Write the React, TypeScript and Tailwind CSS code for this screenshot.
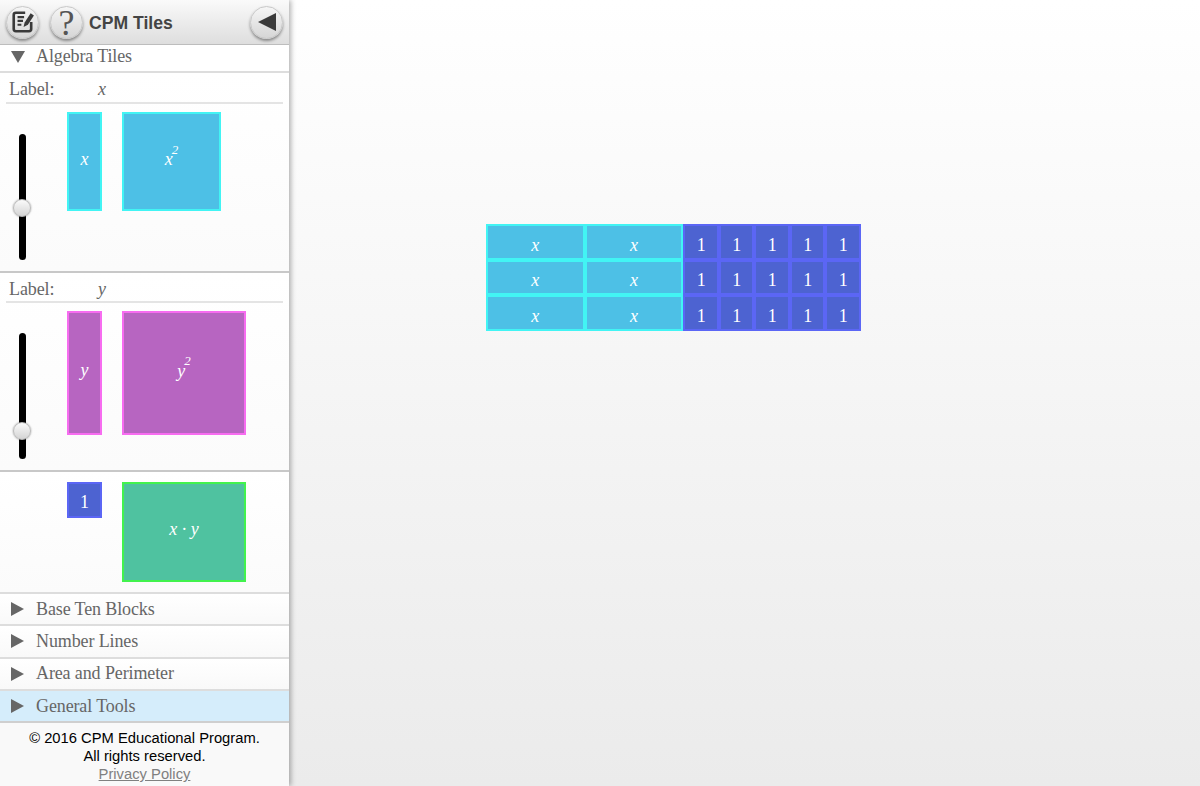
import React from 'react';

const serif = "font-['Liberation_Serif',serif]";
const sans = "font-['Liberation_Sans',Arial,sans-serif]";

const RoundButton = ({ children }: { children: React.ReactNode }) => (
    <div className="w-[33px] h-[33px] rounded-full border border-[#c8c8c8] bg-gradient-to-b from-[#f6f6f6] to-[#d6d6d6] shadow-[0_2px_3px_rgba(0,0,0,0.4)] flex items-center justify-center shrink-0">
        {children}
    </div>
);

const Tile = ({ className, children }: { className: string; children: React.ReactNode }) => (
    <div className={`${serif} border-2 flex items-center justify-center text-white text-[18px] leading-none ${className}`}>
        {children}
    </div>
);

const Slider = ({ className }: { className: string }) => (
    <div className={`relative w-[7px] h-[126px] bg-black rounded-full ml-[18.5px] shrink-0 ${className}`}>
        <div className="absolute left-[-5.5px] top-[var(--thumb)] w-[18px] h-[18px] rounded-full border border-[#bbbbbb] bg-gradient-to-b from-[#fbfbfb] to-[#d4d4d4] shadow-[0_0_2px_rgba(0,0,0,0.4)]" />
    </div>
);

const LabelRow = ({ name, className }: { name: string; className: string }) => (
    <div className={`${serif} mx-[6px] pl-[3px] border-b-2 border-[#e4e4e4] flex items-center text-[18px] tracking-[-0.1px] text-[#666666] ${className}`}>
        <span className="w-[89px]">Label:</span>
        <span className="italic">{name}</span>
    </div>
);

const MenuRow = ({ label, active, last }: { label: string; active?: boolean; last?: boolean }) => (
    <div className={`${serif} h-[32.3px] pl-[11px] flex items-center text-[18px] tracking-[-0.12px] text-[#666666] border-b-2 ${last ? 'border-[#cfcfcf]' : 'border-[#dddddd]'} ${active ? 'bg-[#d5edfb]' : 'bg-gradient-to-b from-white to-[#f9f9f9]'}`}>
        <svg width="13" height="14" viewBox="0 0 13 14" className="mr-[12px] shrink-0">
            <path d="M0 0 L13 7 L0 14 Z" fill="#666666" />
        </svg>
        {label}
    </div>
);

const xTile = 'w-[98.7px] h-[35.5px] bg-[#4dc0e6] border-[#42f4f4] pt-[6px]';
const unitTile = 'w-[35.5px] h-[35.5px] bg-[#4d63d1] border-[#5b66f5] pt-[6px]';

export default function App() {
    const rows = [0, 1, 2];
    const units = [0, 1, 2, 3, 4];

    return (
        <div className="flex w-[1200px] h-[786px] overflow-hidden bg-gradient-to-b from-white to-[#ebebeb]">
            {/* Sidebar */}
            <div className="w-[289px] h-full shrink-0 flex flex-col bg-[#fbfbfb] shadow-[2px_0_5px_rgba(0,0,0,0.3)] z-10">
                <div className="h-[45px] flex items-center pl-[6px] pr-[6px] border-b border-[#bdbdbd] bg-gradient-to-b from-[#fafafa] to-[#dedede]">
                    <RoundButton>
                        <svg width="24" height="24" viewBox="0 0 22 22" fill="none" stroke="#3a3a3a">
                            <path d="M13 2.5 H4.5 Q2.5 2.5 2.5 4.5 V17.5 Q2.5 19.5 4.5 19.5 H16.5 Q18.5 19.5 18.5 17.5 V11" strokeWidth="2.4" />
                            <path d="M6 6.5 H12 M6 10 H11 M6 13.5 H9.5" strokeWidth="2" />
                            <path d="M11.5 15.5 L12.5 11.5 L18 3 L21 5 L15.5 13.5 Z" fill="#3a3a3a" stroke="none" />
                        </svg>
                    </RoundButton>
                    <div className="ml-[11px]">
                        <RoundButton>
                            <span className={`${serif} text-[36px] leading-none pt-[2px] text-[#555555] font-normal`}>?</span>
                        </RoundButton>
                    </div>
                    <span className={`${sans} ml-[6px] pt-[2px] text-[17.6px] font-bold text-[#444444]`}>CPM Tiles</span>
                    <div className="ml-auto">
                        <RoundButton>
                            <svg width="20" height="20" viewBox="0 0 20 20">
                                <path d="M1 10 L19 1 V19 Z" fill="#3a3a3a" />
                            </svg>
                        </RoundButton>
                    </div>
                </div>

                <div className={`${serif} h-[28px] pl-[11px] pb-[3px] flex items-center text-[18px] tracking-[-0.12px] text-[#666666] border-b-2 border-[#dddddd] bg-white`}>
                    <svg width="14" height="12" viewBox="0 0 14 12" className="mr-[11px] shrink-0">
                        <path d="M0 0 L14 0 L7 12 Z" fill="#666666" />
                    </svg>
                    Algebra Tiles
                </div>

                {/* x panel */}
                <div className="h-[200px] border-b-2 border-[#c8c8c8] bg-gradient-to-b from-white to-[#fbfbfb]">
                    <LabelRow name="x" className="h-[31px] pt-[4px]" />
                    <div className="flex">
                        <Slider className="mt-[30px] [--thumb:65px]" />
                        <div className="flex gap-[20px] ml-[41.5px] mt-[8px] items-start">
                            <Tile className="w-[35px] h-[99px] bg-[#4dc0e6] border-[#42f4f4] pb-[6px] italic">x</Tile>
                            <Tile className="w-[99px] h-[99px] bg-[#4dc0e6] border-[#42f4f4] pb-[6px] italic">
                                <span>x<sup className="text-[13px] align-[5px] leading-none -ml-[1px]">2</sup></span>
                            </Tile>
                        </div>
                    </div>
                </div>

                {/* y panel */}
                <div className="h-[199px] border-b-2 border-[#c8c8c8] bg-gradient-to-b from-white to-[#fbfbfb]">
                    <LabelRow name="y" className="h-[30px] pt-[4px]" />
                    <div className="flex">
                        <Slider className="mt-[30px] [--thumb:89px]" />
                        <div className="flex gap-[20px] ml-[41.5px] mt-[8px] items-start">
                            <Tile className="w-[35px] h-[124px] bg-[#b765c1] border-[#f76cf0] pb-[6px] italic">y</Tile>
                            <Tile className="w-[124px] h-[124px] bg-[#b765c1] border-[#f76cf0] pb-[6px] italic">
                                <span>y<sup className="text-[13px] align-[5px] leading-none -ml-[1px]">2</sup></span>
                            </Tile>
                        </div>
                    </div>
                </div>

                {/* unit panel */}
                <div className="h-[122px] border-b-2 border-[#dddddd] bg-gradient-to-b from-white to-[#fbfbfb] flex gap-[20px] pl-[67px] pt-[10px] items-start">
                    <Tile className="w-[35px] h-[36px] bg-[#4d63d1] border-[#5b66f5] pt-[4px]">1</Tile>
                    <Tile className="w-[124px] h-[100px] bg-[#4fc2a0] border-[#42f24e] pb-[6px] italic">x · y</Tile>
                </div>

                <MenuRow label="Base Ten Blocks" />
                <MenuRow label="Number Lines" />
                <MenuRow label="Area and Perimeter" />
                <MenuRow label="General Tools" active last />

                <div className={`${sans} flex-1 bg-[#f9f9f9] pt-[6px] text-center text-[14.75px] leading-[18px] text-black`}>
                    <div>© 2016 CPM Educational Program.</div>
                    <div>All rights reserved.</div>
                    <div className="text-[#808080] underline">Privacy Policy</div>
                </div>
            </div>

            {/* Canvas */}
            <div className="flex-1 pl-[197px] pt-[224px]">
                <div className="flex items-start">
                    <div className="flex flex-col">
                        {rows.map((r) => (
                            <div key={r} className="flex">
                                <Tile className={xTile}><span className="italic">x</span></Tile>
                                <Tile className={xTile}><span className="italic">x</span></Tile>
                            </div>
                        ))}
                    </div>
                    <div className="flex flex-col">
                        {rows.map((r) => (
                            <div key={r} className="flex">
                                {units.map((u) => (
                                    <Tile key={u} className={unitTile}>1</Tile>
                                ))}
                            </div>
                        ))}
                    </div>
                </div>
            </div>
        </div>
    );
}
